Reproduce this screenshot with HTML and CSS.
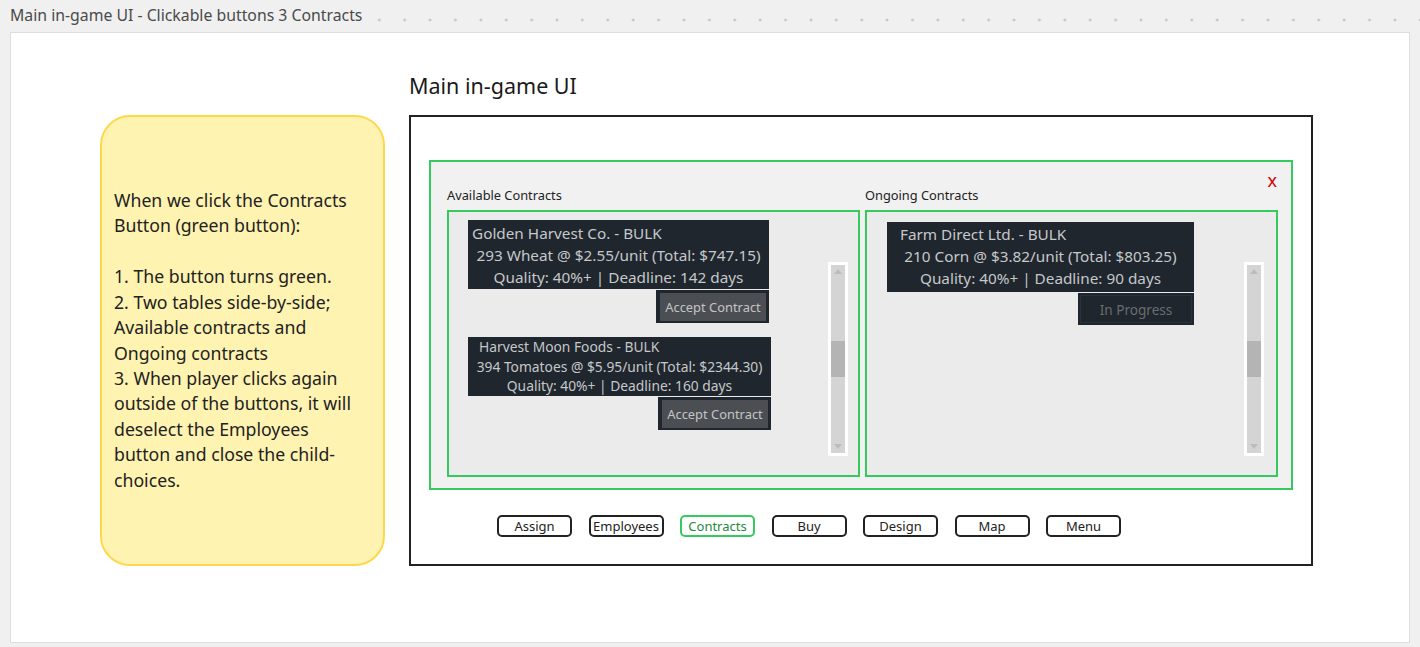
FILE: index.html
```html
<!DOCTYPE html>
<html>
<head>
<meta charset="utf-8">
<link rel="stylesheet" href="styles.css">
</head>
<body>
<header class="header">
  <div class="header-title">Main in-game UI - Clickable buttons 3 Contracts</div>
</header>
<main class="canvas">
  <div class="note">
    <p class="note-text">When we click the Contracts Button (green button):<br><br>1. The button turns green.<br>2. Two tables side-by-side; Available contracts and Ongoing contracts<br>3. When player clicks again outside of the buttons, it will deselect the Employees button and close the child-choices.</p>
  </div>
  <section class="mock">
    <div class="mock-title">Main in-game UI</div>
    <div class="frame">
      <div class="panel">
        <span class="close">x</span>
        <div class="col">
          <div class="col-label">Available Contracts</div>
          <div class="box box-left">
            <div class="list list-left">
              <div class="contract">
                <div class="card card-lg card-a">
                  <div class="line-first pad-a">Golden Harvest Co. - BULK</div>
                  <div class="line">293 Wheat @ $2.55/unit (Total: $747.15)</div>
                  <div class="line">Quality: 40%+ | Deadline: 142 days</div>
                </div>
                <div class="btn-accept">Accept Contract</div>
              </div>
              <div class="contract">
                <div class="card card-sm">
                  <div class="line-first pad-b">Harvest Moon Foods - BULK</div>
                  <div class="line">394 Tomatoes @ $5.95/unit (Total: $2344.30)</div>
                  <div class="line">Quality: 40%+ | Deadline: 160 days</div>
                </div>
                <div class="btn-accept">Accept Contract</div>
              </div>
            </div>
            <div class="scrollbar sb-left">
              <div class="track">
                <span class="arrow-up"></span>
                <span class="thumb"></span>
                <span class="arrow-down"></span>
              </div>
            </div>
          </div>
        </div>
        <div class="col">
          <div class="col-label">Ongoing Contracts</div>
          <div class="box box-right">
            <div class="list list-right">
              <div class="contract">
                <div class="card card-lg card-c">
                  <div class="line-first pad-c">Farm Direct Ltd. - BULK</div>
                  <div class="line">210 Corn @ $3.82/unit (Total: $803.25)</div>
                  <div class="line">Quality: 40%+ | Deadline: 90 days</div>
                </div>
                <div class="btn-progress">In Progress</div>
              </div>
            </div>
            <div class="scrollbar sb-right">
              <div class="track">
                <span class="arrow-up"></span>
                <span class="thumb"></span>
                <span class="arrow-down"></span>
              </div>
            </div>
          </div>
        </div>
      </div>
      <nav class="buttons">
        <div class="nav-btn">Assign</div>
        <div class="nav-btn">Employees</div>
        <div class="nav-btn nav-active">Contracts</div>
        <div class="nav-btn">Buy</div>
        <div class="nav-btn">Design</div>
        <div class="nav-btn">Map</div>
        <div class="nav-btn">Menu</div>
      </nav>
    </div>
  </section>
</main>
</body>
</html>
```
FILE: styles.css
```css
* { box-sizing: border-box; }
html, body { margin: 0; padding: 0; }
body {
  background-color: #f0f0f0;
  font-family: "Noto Sans", "Open Sans", sans-serif;
  color: #222;
  width: 1420px;
  height: 647px;
  overflow: hidden;
}
.header {
  height: 32px;
  display: flex;
  background-image: radial-gradient(circle, #c6c6c6 0, #c6c6c6 1px, rgba(240,240,240,0) 1.8px);
  background-size: 25.4px 32px;
  background-position: 366.6px 3.5px;
  background-repeat: repeat-x;
}
.header-title {
  background: #f0f0f0;
  padding: 5px 10px 0 10px;
  height: 32px;
  font-size: 15.8px;
  line-height: 20px;
  color: #4a4a4a;
  width: 374px;
  white-space: nowrap;
}
.canvas {
  margin: 0 10px;
  width: 1400px;
  height: 611px;
  background: #fff;
  border: 1px solid #dedede;
  display: flex;
  align-items: flex-start;
}
.note {
  margin: 82px 0 0 89px;
  width: 285px;
  height: 451px;
  border: 2px solid #fcd94c;
  border-radius: 30px;
  background: #fff3b1;
  display: flex;
  align-items: center;
  padding: 0 24px 0 12px;
}
.note-text {
  margin: 0;
  font-size: 17.7px;
  line-height: 25.4px;
  color: #222;
}
.mock {
  margin-left: 24px;
  padding-top: 39px;
}
.mock-title {
  font-size: 21.5px;
  line-height: 28px;
  color: #1a1a1a;
  margin-bottom: 15px;
}
.frame {
  width: 904px;
  height: 451px;
  border: 2px solid #222;
  padding: 43px 18px 0 18px;
  display: flex;
  flex-direction: column;
}
.panel {
  position: relative;
  width: 864px;
  height: 330px;
  border: 2px solid #35c95f;
  background: #f1f1f1;
  padding: 25px 12px 11px 16px;
  display: flex;
  gap: 5px;
}
.close {
  position: absolute;
  top: 8px;
  right: 14px;
  font-size: 18px;
  line-height: 20px;
  color: #d10000;
}
.col {
  width: 413px;
  display: flex;
  flex-direction: column;
}
.col-label {
  font-size: 12.8px;
  line-height: 17px;
  margin-bottom: 6px;
  color: #222;
}
.box {
  position: relative;
  flex: 1;
  border: 2px solid #35c95f;
  background: #ebebeb;
}
.list {
  display: flex;
  flex-direction: column;
  align-items: flex-start;
  gap: 14px;
}
.list-left { padding: 8px 0 0 19px; }
.list-right { padding: 10px 0 0 20px; }
.contract {
  display: flex;
  flex-direction: column;
  align-items: flex-end;
}
.card {
  background: #1f262d;
  color: #c6c8ca;
  white-space: nowrap;
}
.card-lg {
  font-size: 15.3px;
  line-height: 22px;
}
.card-a { width: 301px; height: 69px; padding-top: 1.5px; }
.card-c { width: 307px; height: 70px; padding-top: 0.5px; }
.card-sm {
  width: 303px;
  height: 59px;
  font-size: 13.8px;
  line-height: 19.5px;
}
.line { text-align: center; }
.line-first { text-align: left; }
.pad-a { padding-left: 4px; }
.pad-b { padding-left: 11px; }
.pad-c { padding-left: 13px; }
.btn-accept {
  margin-top: 1px;
  width: 113px;
  height: 33px;
  border-style: solid;
  border-color: #1f262d;
  border-width: 3px 3px 2px 4px;
  background: #4b4f53;
  color: #c4c4c4;
  font-size: 12.9px;
  display: flex;
  align-items: center;
  justify-content: center;
}
.btn-progress {
  margin-top: 1px;
  width: 116px;
  height: 32px;
  background: #1f262d;
  box-shadow: inset 0 0 0 2px #1f262d, inset 0 0 0 3px #2b3138;
  color: #6a6d70;
  font-size: 13.6px;
  display: flex;
  align-items: center;
  justify-content: center;
}
.scrollbar {
  position: absolute;
  top: 50px;
  width: 20px;
  height: 194px;
  background: #fff;
  padding: 3px;
}
.sb-left { right: 10px; }
.sb-right { right: 12px; }
.track {
  position: relative;
  width: 100%;
  height: 100%;
  background: #d4d4d4;
}
.thumb {
  position: absolute;
  left: 0;
  right: 0;
  top: 76px;
  height: 36px;
  background: #b4b4b4;
}
.arrow-up, .arrow-down {
  position: absolute;
  left: 3px;
  width: 0;
  height: 0;
  border-left: 4px solid transparent;
  border-right: 4px solid transparent;
}
.arrow-up { top: 4px; border-bottom: 5px solid #bcbcbc; }
.arrow-down { bottom: 4px; border-top: 5px solid #bcbcbc; }
.buttons {
  margin-top: 25px;
  margin-left: 68px;
  display: flex;
  gap: 16.5px;
}
.nav-btn {
  width: 75px;
  height: 22px;
  border: 2px solid #222;
  border-radius: 5px;
  background: #fff;
  font-size: 13px;
  color: #222;
  display: flex;
  align-items: center;
  justify-content: center;
}
.nav-active {
  border-color: #35c95f;
  color: #1e8a3e;
}
```
